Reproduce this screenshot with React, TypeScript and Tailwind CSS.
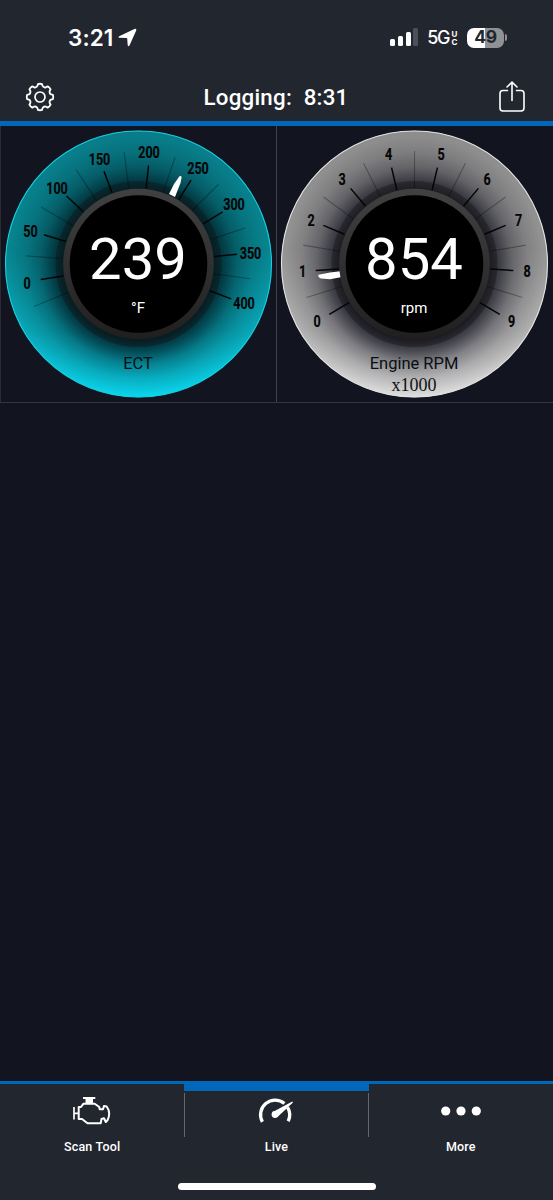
import type { ReactNode } from "react"

type Label = { text: string; x: number; y: number }

type GaugeProps = {
  id: string
  value: string
  unit: string
  name: string
  note?: string
  rim: string
  face: [string, string, string, string]
  shade: string
  start: number
  step: number
  majors: number
  firstMinor: number
  minors: number
  labels: Label[]
  needle: string
}

const ectLabels: Label[] = [
  { text: "0", x: 27, y: 157 },
  { text: "50", x: 30.5, y: 105 },
  { text: "100", x: 57, y: 61.5 },
  { text: "150", x: 99.5, y: 33 },
  { text: "200", x: 149, y: 25.5 },
  { text: "250", x: 198, y: 42 },
  { text: "300", x: 234, y: 78 },
  { text: "350", x: 250.5, y: 127 },
  { text: "400", x: 244, y: 177 },
]

const rpmLabels: Label[] = [
  { text: "0", x: 41, y: 195.4 },
  { text: "1", x: 26.5, y: 145 },
  { text: "2", x: 35, y: 93.7 },
  { text: "3", x: 66, y: 52.7 },
  { text: "4", x: 112.5, y: 27.7 },
  { text: "5", x: 165, y: 27.7 },
  { text: "6", x: 211, y: 52.7 },
  { text: "7", x: 242.5, y: 93.7 },
  { text: "8", x: 251, y: 145 },
  { text: "9", x: 235.5, y: 195.4 },
]

function Gauge(props: GaugeProps) {
  const { id, face, shade, start, step } = props
  const majors = Array.from({ length: props.majors }, (_, i) => start + i * step)
  const minors = Array.from(
    { length: props.minors },
    (_, i) => props.firstMinor + i * step
  )

  return (
    <svg
      width="276"
      height="276"
      viewBox="0 0 276 276"
      className="block font-[Roboto,sans-serif]"
    >
      <defs>
        <linearGradient id={`${id}-face`} x1="0" y1="0" x2="0" y2="1">
          <stop offset="0" stopColor={face[0]} />
          <stop offset="0.45" stopColor={face[1]} />
          <stop offset="0.75" stopColor={face[2]} />
          <stop offset="1" stopColor={face[3]} />
        </linearGradient>
        <radialGradient
          id={`${id}-shade`}
          gradientUnits="userSpaceOnUse"
          cx="138.5"
          cy="140"
          r="130"
        >
          <stop offset="0.57" stopColor={shade} stopOpacity="0.92" />
          <stop offset="0.66" stopColor={shade} stopOpacity="0.68" />
          <stop offset="0.76" stopColor={shade} stopOpacity="0.36" />
          <stop offset="0.87" stopColor={shade} stopOpacity="0.15" />
          <stop offset="1" stopColor={shade} stopOpacity="0" />
        </radialGradient>
        <linearGradient id={`${id}-ring`} x1="0" y1="0" x2="0" y2="1">
          <stop offset="0" stopColor="#414141" />
          <stop offset="0.55" stopColor="#2f2f2f" />
          <stop offset="1" stopColor="#211e1e" />
        </linearGradient>
      </defs>

      {/* Face */}
      <circle cx="138.5" cy="138" r="133.2" fill={`url(#${id}-face)`} />
      <circle cx="138.5" cy="138" r="133.2" fill={`url(#${id}-shade)`} />
      <circle
        cx="138.5"
        cy="138"
        r="133"
        fill="none"
        stroke={props.rim}
        strokeWidth="1.1"
      />
      <circle cx="138.5" cy="138" r="83" fill="#111" fillOpacity="0.4" />

      {/* Ticks */}
      {minors.map((a) => (
        <line
          key={a}
          x1="138.5"
          x2="138.5"
          y1="25"
          y2="62"
          stroke="#000"
          strokeOpacity="0.3"
          strokeWidth="1.1"
          transform={`rotate(${a} 138.5 138)`}
        />
      ))}
      {majors.map((a) => (
        <line
          key={a}
          x1="138.5"
          x2="138.5"
          y1="39"
          y2="62"
          stroke="#050505"
          strokeWidth="1.5"
          transform={`rotate(${a} 138.5 138)`}
        />
      ))}
      {props.labels.map((l) => (
        <text
          key={l.text}
          transform={`translate(${l.x} ${l.y + 6}) scale(0.74 1)`}
          textAnchor="middle"
          fontSize="17"
          fontWeight="700"
          fill="#050505"
          stroke="#050505"
          strokeWidth="0.2"
        >
          {l.text}
        </text>
      ))}

      <path d={props.needle} fill="#fff" />

      {/* Hub */}
      <circle cx="138.5" cy="138" r="75.3" fill={`url(#${id}-ring)`} />
      <circle cx="138.5" cy="138" r="68.8" fill="#000" />

      <text x="138" y="152.9" textAnchor="middle" fontSize="58" fill="#fff">
        {props.value}
      </text>
      <text x="138" y="187" textAnchor="middle" fontSize="15" fill="#fff">
        {props.unit}
      </text>
      <text x="138" y="243" textAnchor="middle" fontSize="16.5" fill="#0a0f12">
        {props.name}
      </text>
      {props.note && (
        <text
          x="138"
          y="265.3"
          textAnchor="middle"
          fontSize="18"
          fill="#111"
          className="font-['Liberation_Serif',serif]"
        >
          {props.note}
        </text>
      )}
    </svg>
  )
}

function StatusBar() {
  return (
    <div className="flex h-[75px] items-center justify-between pr-[46px] pl-[68px]">
      <div className="flex items-center gap-[5px]">
        <span className="pt-[1px] font-[Inter,sans-serif] text-[22.5px] leading-none font-semibold tracking-[0.1px]">
          3:21
        </span>
        <svg width="19" height="19" viewBox="0 0 19 19" fill="#fff">
          <path d="M1.200 8.300 16.400 1Q18.800.3 18.200 2.600L11.600 17.200Q10.400 19.500 9.700 17.200L9.200 10.600Q9.100 9.900 8.400 9.900L1.500 9.800Q-.5 9.300 1.200 8.300Z" />
        </svg>
      </div>

      <div className="flex items-center">
        <div className="mr-[9px] mb-[1px] flex h-[18px] items-end gap-[2.7px]">
          <div className="h-[7px] w-[5px] rounded-[1.5px] bg-white" />
          <div className="h-[10px] w-[5px] rounded-[1.5px] bg-white" />
          <div className="h-[14px] w-[5px] rounded-[1.5px] bg-white" />
          <div className="h-[18px] w-[5px] rounded-[1.5px] bg-[#4d5059]" />
        </div>
        <span className="pt-[1px] font-[Inter,sans-serif] text-[18px] leading-[18px] font-medium tracking-[-1.4px]">
          5G
        </span>
        <div className="mr-[9px] ml-[2px] flex w-[7px] flex-col items-center font-[Inter,sans-serif] text-[8px] leading-[8px] font-bold">
          <span className="h-[8px]">U</span>
          <span className="h-[8px]">C</span>
        </div>
        <div className="flex h-[20px] w-[37px] items-center justify-center rounded-[7px] bg-linear-to-r from-white from-49% to-[#8f9195] to-49% font-[Inter,sans-serif] text-[17.5px] font-bold tracking-[-0.3px] text-[#22262f]">
          49
        </div>
        <div className="ml-[1px] h-[7px] w-[2px] rounded-r-full bg-[#8f9195]" />
      </div>
    </div>
  )
}

function GearIcon() {
  // eight-lobed cog outline around the centre
  const lobes = Array.from({ length: 8 }, (_, i) => i * 45)
  const point = (r: number, deg: number) => {
    const t = (deg * Math.PI) / 180
    return `${(15 + r * Math.sin(t)).toFixed(2)} ${(15 - r * Math.cos(t)).toFixed(2)}`
  }
  const d = lobes
    .map(
      (a, i) =>
        `${i ? "L" : "M"}${point(13.1, a - 9)}Q${point(13.6, a)} ${point(13.1, a + 9)}L${point(11.4, a + 13)}Q${point(9.8, a + 22.5)} ${point(11.4, a + 32)}`
    )
    .join("")

  return (
    <svg width="30" height="30" viewBox="0 0 30 30" fill="none" stroke="#fff">
      <path d={`${d}Z`} strokeWidth="1.8" strokeLinejoin="round" />
      <circle cx="15" cy="15" r="5" strokeWidth="1.7" />
    </svg>
  )
}

function ShareIcon() {
  return (
    <svg
      width="26"
      height="32"
      viewBox="0 0 26 32"
      fill="none"
      stroke="#fff"
      strokeWidth="1.6"
      strokeLinecap="round"
      strokeLinejoin="round"
    >
      <path d="M8.500 9.500H4Q1 9.500 1 12.500V27Q1 30 4 30H22Q25 30 25 27V12.500Q25 9.500 22 9.500H17.500" />
      <path d="M13 19.500V1.500M8 6 13 1.200 18 6" />
    </svg>
  )
}

function EngineIcon() {
  return (
    <svg width="38" height="30" viewBox="0 0 38 30" fill="none" stroke="#fff">
      <path d="M10 2H22.300" strokeWidth="2" />
      <path d="M12.500 5.500H20" strokeWidth="5" />
      <path
        d="M10.300 7.800H21.700L26.300 11 26.700 13.300H30L31 9.900 33.700 10.500Q36.200 14 36.200 17.500 36.200 21 34.500 24.200L32.800 26 31 22.300 28.500 23 27.700 27.300H14.500L9 23H5.700V11H8Z"
        strokeWidth="2"
        strokeLinejoin="round"
      />
      <path d="M1 11V23.500M1 17.300H5.700" strokeWidth="1.700" />
    </svg>
  )
}

function SpeedIcon() {
  return (
    <svg width="36" height="28" viewBox="0 0 36 28" fill="none" stroke="#fff">
      <path d="M4.400 24.900A14.600 14.600 0 0 1 26.400 6.500" strokeWidth="3.300" />
      <path d="M29.600 10.300A14.600 14.600 0 0 1 30.200 24.200" strokeWidth="3.300" />
      <path d="M14.800 15 34.300 4.600 35 5.600 19.500 20Z" fill="#fff" stroke="none" />
      <circle cx="17" cy="17.500" r="3.400" fill="#fff" stroke="none" />
    </svg>
  )
}

function MoreIcon() {
  return (
    <svg width="40" height="10" viewBox="0 0 40 10" fill="#fff">
      <circle cx="4.700" cy="5" r="4.600" />
      <circle cx="20" cy="5" r="4.600" />
      <circle cx="35.300" cy="5" r="4.600" />
    </svg>
  )
}

function Tab({
  icon,
  label,
  active,
}: {
  icon: ReactNode
  label: string
  active?: boolean
}) {
  return (
    <div className="flex flex-1 flex-col items-center">
      <div
        className={active ? "h-[7px] w-full bg-[#0067b9]" : "h-[7px] w-full"}
      />
      <div className="flex h-[40px] items-center justify-center">{icon}</div>
      <span className="mt-[8px] text-[12.5px] leading-[16px] font-medium tracking-[0.2px]">
        {label}
      </span>
    </div>
  )
}

export default function App() {
  return (
    <div className="flex h-[1200px] w-[553px] flex-col overflow-hidden bg-[#121520] font-[Roboto,sans-serif] text-white">
      {/* Header */}
      <header className="h-[126px] border-b-[5px] border-[#0067b9] bg-[#22262f]">
        <StatusBar />
        <div className="flex h-[44px] items-center justify-between pr-[28px] pl-[25px]">
          <GearIcon />
          <h1 className="pt-[1px] pr-[2px] text-[22.3px] font-medium tracking-[0.25px] whitespace-pre">
            Logging:{"  "}8:31
          </h1>
          <ShareIcon />
        </div>
      </header>

      {/* Gauges */}
      <main className="flex-1">
        <div className="grid h-[277px] grid-cols-[276px_277px] border-b border-[#34363e]">
          <div className="-mr-px border-l border-[#292c35]">
            <div className="-ml-px">
              <Gauge
                id="ect"
                value="239"
                unit="°F"
                name="ECT"
                rim="#16cfe2"
                face={["#087d89", "#07848f", "#09a6b6", "#0ad6ed"]}
                shade="#001a22"
                start={-99}
                step={26.2}
                majors={9}
                firstMinor={-112.1}
                minors={9}
                labels={ectLabels}
                needle="M169 68 174 58 179.500 50.200Q181.500 49.500 181.500 51.500L180.500 57 175 71Z"
              />
            </div>
          </div>
          <div className="border-l border-[#41434b]">
            <div className="-ml-px">
              <Gauge
                id="rpm"
                value="854"
                unit="rpm"
                name="Engine RPM"
                note="x1000"
                rim="#e2e2e2"
                face={["#8d8d8d", "#939393", "#b0b0b0", "#dedede"]}
                shade="#161622"
                start={-120.6}
                step={26.8}
                majors={10}
                firstMinor={-107.2}
                minors={9}
                labels={rpmLabels}
                needle="M64 145.200 54 146.500 42.500 148.800Q41.300 151 45 152.500L54 153.200 66 151Z"
              />
            </div>
          </div>
        </div>
      </main>

      {/* Tab bar */}
      <nav className="h-[119px] border-t-[3px] border-[#0067b9] bg-[#22262f]">
        <div className="flex">
          <Tab icon={<EngineIcon />} label="Scan Tool" />
          <div className="mt-[9px] -mr-px h-[44px] w-px bg-[#64676d]" />
          <Tab icon={<SpeedIcon />} label="Live" active />
          <div className="mt-[9px] -ml-px h-[44px] w-px bg-[#64676d]" />
          <Tab icon={<MoreIcon />} label="More" />
        </div>
        <div className="mx-auto mt-[28px] h-[7px] w-[198px] rounded-full bg-white" />
      </nav>
    </div>
  )
}
